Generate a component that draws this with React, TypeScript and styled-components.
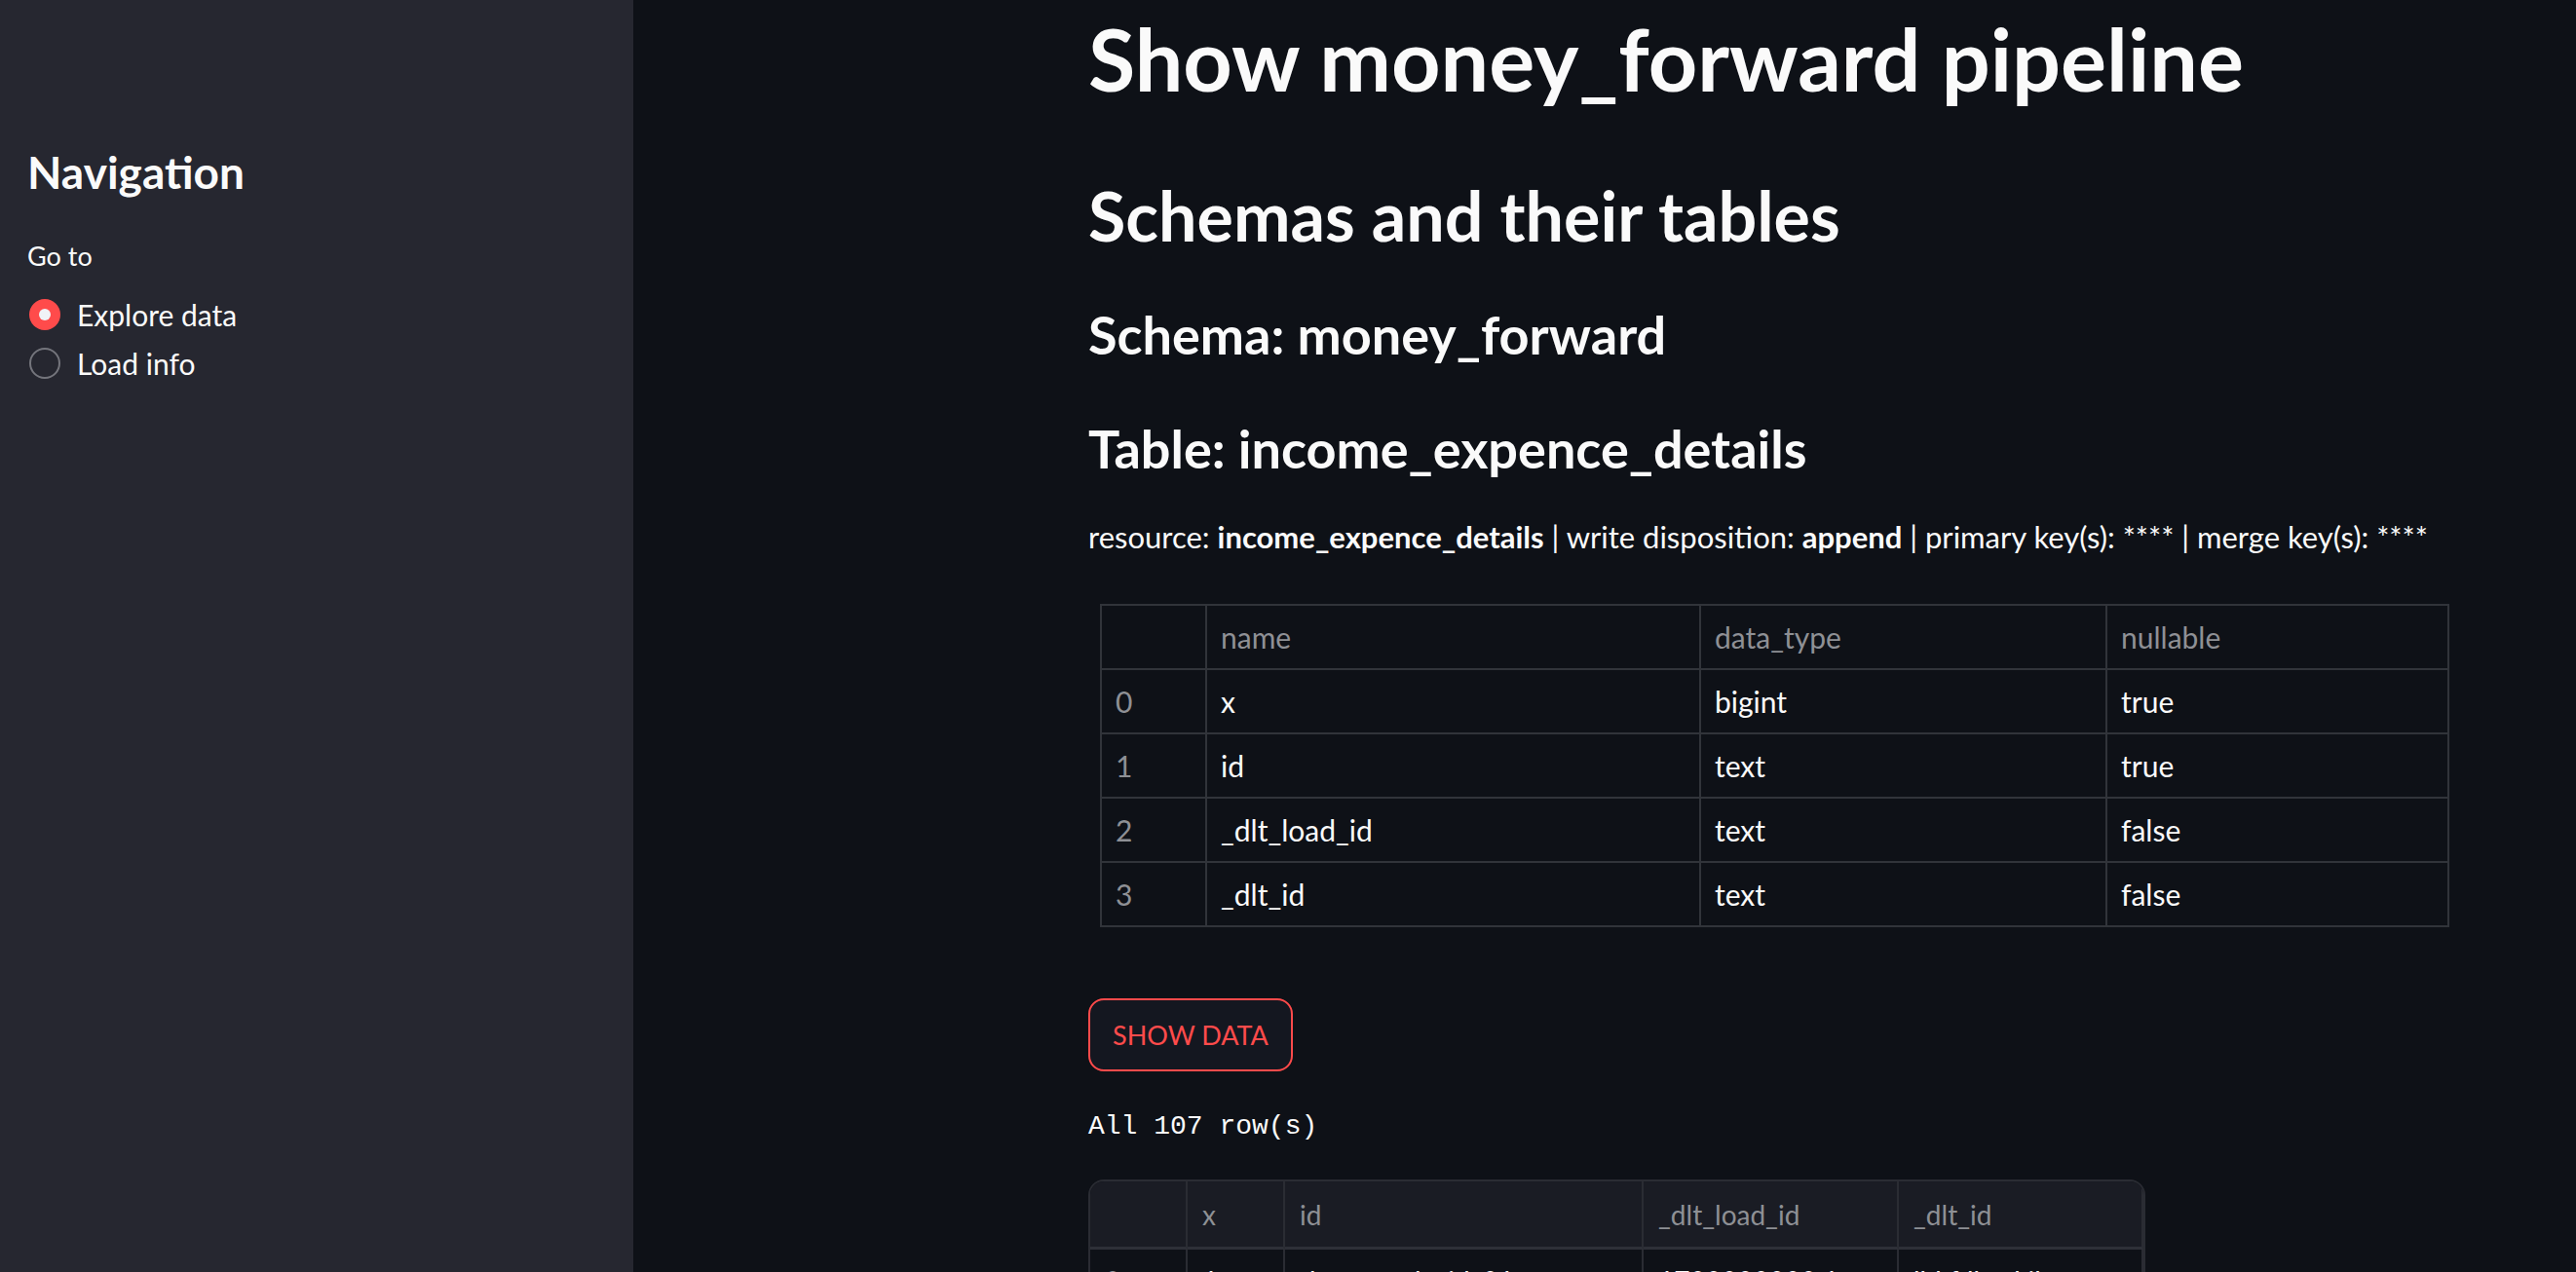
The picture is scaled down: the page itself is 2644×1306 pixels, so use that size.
import React from "react";
import styled, { createGlobalStyle } from "styled-components";

const GlobalStyle = createGlobalStyle`
  html, body {
    margin: 0;
    padding: 0;
    background: #0e1117;
    overflow: hidden;
  }
  * { box-sizing: border-box; }
`;

const SANS = `"Lato", "Noto Sans", sans-serif`;
const MONO = `"Liberation Mono", "DejaVu Sans Mono", monospace`;

const Shell = styled.div`
  display: grid;
  grid-template-columns: 650px 1fr;
  height: 100vh;
  font-family: ${SANS};
  color: #fafafa;
`;

const Sidebar = styled.aside`
  background: #262730;
  padding: 147px 0 0 28px;
  display: flex;
  flex-direction: column;
`;

const SideTitle = styled.h2`
  margin: 0;
  font-size: 46px;
  line-height: 60px;
  font-weight: 700;
`;

const FieldLabel = styled.div`
  margin-top: 38px;
  font-size: 27px;
  line-height: 36px;
`;

const RadioGroup = styled.div`
  margin-top: 17px;
  display: flex;
  flex-direction: column;
`;

const RadioRow = styled.label`
  display: flex;
  align-items: center;
  gap: 17px;
  height: 50px;
  font-size: 30px;
  padding-left: 2px;
`;

const RadioDot = styled.span<{ $on: boolean }>`
  width: 32px;
  height: 32px;
  border-radius: 50%;
  flex: none;
  display: flex;
  align-items: center;
  justify-content: center;
  background: ${(p) => (p.$on ? "#ff4b4b" : "transparent")};
  border: ${(p) => (p.$on ? "none" : "2px solid #74757c")};
  &::after {
    content: "";
    display: ${(p) => (p.$on ? "block" : "none")};
    width: 12px;
    height: 12px;
    border-radius: 50%;
    background: #f0f2f6;
  }
`;

const Main = styled.main`
  overflow: hidden;
  padding: 5px 0 0 467px;
`;

const Content = styled.div`
  width: 1408px;
  display: flex;
  flex-direction: column;
  align-items: flex-start;
`;

const H1 = styled.h1`
  margin: 0;
  font-size: 88px;
  line-height: 110px;
  font-weight: 700;
  white-space: nowrap;
`;

const H2 = styled.h2`
  margin: 61px 0 0;
  font-size: 70px;
  line-height: 90px;
  font-weight: 700;
  white-space: nowrap;
`;

const H3 = styled.h3<{ $gap: number }>`
  margin: ${(p) => p.$gap}px 0 0;
  font-size: 54px;
  line-height: 70px;
  font-weight: 700;
  white-space: nowrap;
`;

const Meta = styled.p`
  margin: 33px 0 0;
  font-size: 31px;
  line-height: 44px;
  white-space: nowrap;
  b { font-weight: 700; }
`;

const StaticTable = styled.table`
  margin: 47px 12px 0;
  width: 1383px;
  border-collapse: collapse;
  font-size: 30px;
  table-layout: fixed;
  td, th {
    border: 2px solid #31343a;
    height: 66px;
    padding: 0 0 0 14px;
    text-align: left;
    font-weight: 400;
    vertical-align: middle;
  }
  th { color: #8e9095; }
`;

const IndexCell = styled.td`
  color: #8e9095;
`;

const ShowButton = styled.button`
  margin-top: 73px;
  width: 210px;
  height: 75px;
  border: 2px solid #ff4b4b;
  border-radius: 16px;
  background: #141720;
  color: #ff4b4b;
  font-family: ${SANS};
  font-size: 27px;
  padding: 0;
  cursor: pointer;
`;

const RowCount = styled.pre`
  margin: 37px 0 0;
  font-family: ${MONO};
  font-size: 28px;
  line-height: 40px;
  color: #fafafa;
`;

const Frame = styled.div`
  margin-top: 34px;
  border: 2px solid #2a2c33;
  border-radius: 16px;
  overflow: hidden;
  display: grid;
  grid-template-columns: 100px 100px 368px 262px 251px;
  font-size: 28px;
`;

const FrameHead = styled.div`
  height: 70px;
  background: #1a1c24;
  color: #8e9095;
  border-right: 2px solid #2a2c33;
  border-bottom: 3px solid #2e3038;
  display: flex;
  align-items: center;
  padding-left: 15px;
  &:last-child { border-right: none; }
`;

const FrameCell = styled.div<{ $dim?: boolean }>`
  height: 66px;
  color: ${(p) => (p.$dim ? "#8e9095" : "#fafafa")};
  border-right: 2px solid #2a2c33;
  border-bottom: 2px solid #2a2c33;
  display: flex;
  align-items: center;
  padding-left: 15px;
  white-space: nowrap;
  overflow: hidden;
`;

const schemaRows = [
  ["0", "x", "bigint", "true"],
  ["1", "id", "text", "true"],
  ["2", "_dlt_load_id", "text", "false"],
  ["3", "_dlt_id", "text", "false"],
];

const dataHead = ["", "x", "id", "_dlt_load_id", "_dlt_id"];
const dataRows = [
  ["0", "1", "the_sample_id_01", "1700000000.1", "lbkfdhsakjh"],
  ["1", "2", "the_sample_id_02", "1700000000.1", "kdjfhslkdjf"],
];

export default function App() {
  return (
    <>
      <GlobalStyle />
      <Shell>
        <Sidebar>
          <SideTitle>Navigation</SideTitle>
          <FieldLabel>Go to</FieldLabel>
          <RadioGroup>
            <RadioRow>
              <RadioDot $on />
              Explore data
            </RadioRow>
            <RadioRow>
              <RadioDot $on={false} />
              Load info
            </RadioRow>
          </RadioGroup>
        </Sidebar>
        <Main>
          <Content>
            <H1>Show money_forward pipeline</H1>
            <H2>Schemas and their tables</H2>
            <H3 $gap={43}>Schema: money_forward</H3>
            <H3 $gap={47}>Table: income_expence_details</H3>
            <Meta>
              resource: <b>income_expence_details</b> | write disposition: <b>append</b> | primary key(s): **** | merge key(s): ****
            </Meta>
            <StaticTable>
              <colgroup>
                <col style={{ width: 108 }} />
                <col style={{ width: 507 }} />
                <col style={{ width: 417 }} />
                <col style={{ width: 351 }} />
              </colgroup>
              <thead>
                <tr>
                  <th></th>
                  <th>name</th>
                  <th>data_type</th>
                  <th>nullable</th>
                </tr>
              </thead>
              <tbody>
                {schemaRows.map((r) => (
                  <tr key={r[0]}>
                    <IndexCell>{r[0]}</IndexCell>
                    <td>{r[1]}</td>
                    <td>{r[2]}</td>
                    <td>{r[3]}</td>
                  </tr>
                ))}
              </tbody>
            </StaticTable>
            <ShowButton>SHOW DATA</ShowButton>
            <RowCount>All 107 row(s)</RowCount>
            <Frame>
              {dataHead.map((h, i) => (
                <FrameHead key={i}>{h}</FrameHead>
              ))}
              {dataRows.map((r) =>
                r.map((c, i) => (
                  <FrameCell key={r[0] + i} $dim={i === 0}>
                    {c}
                  </FrameCell>
                ))
              )}
            </Frame>
          </Content>
        </Main>
      </Shell>
    </>
  );
}
